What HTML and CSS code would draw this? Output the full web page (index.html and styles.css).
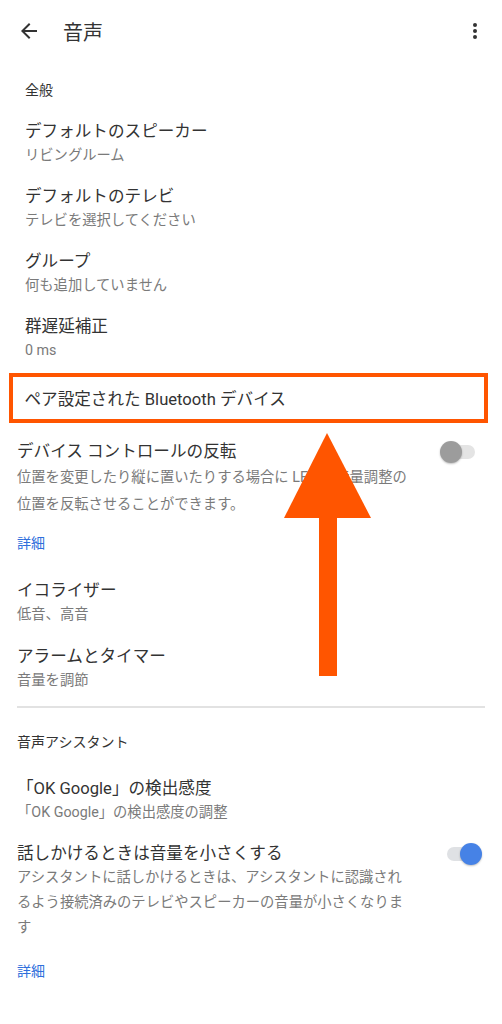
FILE: index.html
```html
<!DOCTYPE html>
<html lang="ja">
<head>
<meta charset="utf-8">
<link rel="stylesheet" href="styles.css">
</head>
<body>
<div class="page">
  <header class="appbar">
    <svg class="icon back" viewBox="0 0 24 24" width="24" height="24"><path d="M20 11H7.83l5.59-5.59L12 4l-8 8 8 8 1.41-1.41L7.83 13H20v-2z" fill="#333"/></svg>
    <h1 class="title">音声</h1>
    <svg class="icon more" viewBox="0 0 24 24" width="24" height="24"><circle cx="12" cy="6" r="2" fill="#333"/><circle cx="12" cy="12" r="2" fill="#333"/><circle cx="12" cy="18" r="2" fill="#333"/></svg>
  </header>

  <section class="general">
    <div class="section-title">全般</div>
    <div class="list">
      <div class="item"><div class="item-title">デフォルトのスピーカー</div><div class="item-sub">リビングルーム</div></div>
      <div class="item"><div class="item-title">デフォルトのテレビ</div><div class="item-sub">テレビを選択してください</div></div>
      <div class="item"><div class="item-title">グループ</div><div class="item-sub">何も追加していません</div></div>
      <div class="item"><div class="item-title">群遅延補正</div><div class="item-sub">0 ms</div></div>
    </div>
  </section>

  <div class="highlight">
    <div class="item-title">ペア設定された Bluetooth デバイス</div>
  </div>

  <section class="lower">
    <div class="toggle-row first">
      <div class="toggle-text">
        <div class="item-title">デバイス コントロールの反転</div>
        <div class="item-sub wide">位置を変更したり縦に置いたりする場合に LED と音量調整の<br>位置を反転させることができます。</div>
      </div>
      <div class="switch off"><span class="track"></span><span class="thumb"></span></div>
    </div>
    <div class="link first-link">詳細</div>

    <div class="item eq"><div class="item-title">イコライザー</div><div class="item-sub">低音、高音</div></div>
    <div class="item alarm"><div class="item-title">アラームとタイマー</div><div class="item-sub">音量を調節</div></div>

    <hr class="divider">

    <div class="section-title assistant">音声アシスタント</div>
    <div class="item ok"><div class="item-title">「OK Google」の検出感度</div><div class="item-sub">「OK Google」の検出感度の調整</div></div>

    <div class="toggle-row second">
      <div class="toggle-text">
        <div class="item-title">話しかけるときは音量を小さくする</div>
        <div class="item-sub wide tight">アシスタントに話しかけるときは、アシスタントに認識され<br>るよう接続済みのテレビやスピーカーの音量が小さくなりま<br>す</div>
      </div>
      <div class="switch on"><span class="track"></span><span class="thumb"></span></div>
    </div>
    <div class="link second-link">詳細</div>
  </section>

  <svg class="arrow" viewBox="0 0 87 243" width="87" height="243"><polygon points="43,0 0,85 87,85" fill="#ff5500"/><rect x="35" y="84" width="18" height="159" fill="#ff5500"/></svg>
</div>
</body>
</html>
```

FILE: styles.css
```css
* { box-sizing: border-box; }
html, body { margin: 0; padding: 0; background: #fff; }
body {
  font-family: "Roboto", "Noto Sans CJK JP", sans-serif;
  color: #333;
}
.page {
  position: relative;
  width: 502px;
  min-height: 1024px;
  overflow: hidden;
}
.appbar {
  height: 64px;
  display: flex;
  align-items: center;
  padding: 2px 27px 0 17px;
}
.icon { display: block; flex: none; }
.back { margin-top: -4px; }
.title {
  margin: 0 0 0 22px;
  font-size: 20px;
  font-weight: 400;
  line-height: 28px;
  flex: 1;
  color: #333;
}
.more { margin-right: -12px; margin-top: -4px; }

.general { padding-left: 25px; }
.section-title {
  font-size: 14px;
  line-height: 20px;
  color: #333;
  padding-top: 16px;
}
.list { margin-top: 20px; }
.item { padding-bottom: 18px; }
.list .item:last-child { padding-bottom: 0; }
.item-title {
  font-size: 16.6px;
  line-height: 24px;
  color: #333;
}
.item-sub {
  font-size: 14.3px;
  line-height: 23px;
  color: #7a7a7a;
}
.highlight {
  margin: 11px 0 0 9px;
  width: 479px;
  height: 50px;
  border: 4.5px solid #ff5500;
  padding: 3px 0 0 11.5px;
  display: flex;
  align-items: center;
}

.lower { padding: 0 17px; }
.toggle-row {
  display: flex;
  align-items: flex-start;
}
.toggle-row.first { margin-top: 17px; }
.toggle-row.second { margin-top: 18px; }
.toggle-text { flex: 1; }
.item-sub.wide { line-height: 27px; margin-top: -0.5px; }
.item-sub.wide.tight { line-height: 25px; }
.switch {
  position: relative;
  width: 36px;
  height: 24px;
  flex: none;
}
.switch .track {
  position: absolute;
  left: 1px; top: 5px;
  width: 34px; height: 14px;
  border-radius: 7px;
  background: #e4e4e4;
}
.switch .thumb {
  position: absolute;
  top: 1px;
  width: 22px; height: 22px;
  border-radius: 50%;
  box-shadow: 0 1px 2px rgba(0,0,0,0.25);
}
.switch.off { margin-top: 0; margin-right: 9px; }
.switch.off .thumb { left: 0; background: #9c9c9c; }
.switch.on { margin-top: 0; margin-right: 3px; }
.switch.on .track { background: #dfe1e4; }
.switch.on .thumb { left: 14px; background: #4682e6; }

.link {
  font-size: 14px;
  line-height: 20px;
  color: #2f6fdc;
}
.first-link { margin-top: 15.5px; }
.second-link { margin-top: 20.5px; }
.item.eq { margin-top: 26px; padding-bottom: 19px; }
.divider {
  border: 0;
  height: 1.5px;
  background: #e2e2e2;
  margin: -4px 0 0 0;
}
.section-title.assistant { padding-top: 24px; }
.item.ok { margin-top: 25px; padding-bottom: 0; }

.arrow {
  position: absolute;
  left: 284px;
  top: 433px;
}
```
